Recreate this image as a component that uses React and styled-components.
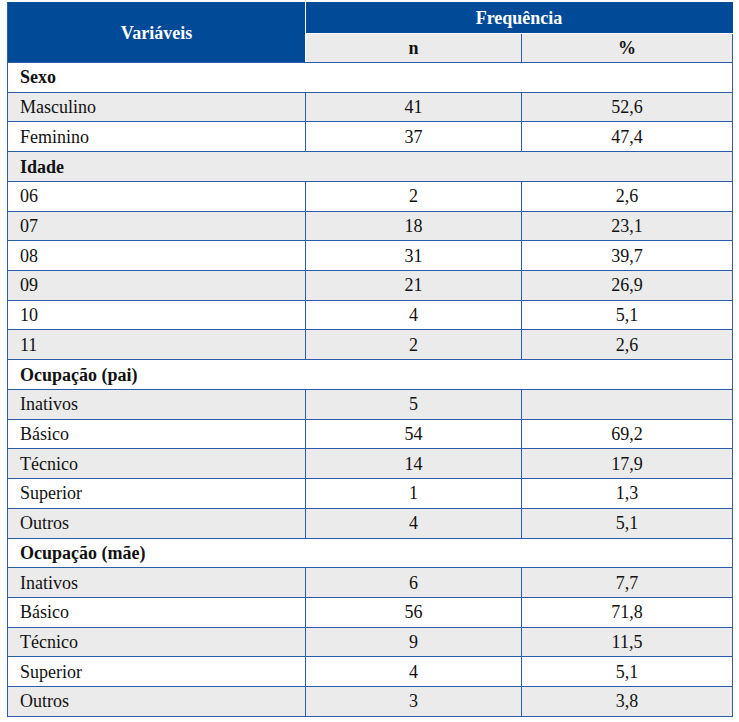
import React from 'react';
import styled, { createGlobalStyle } from 'styled-components';

const Global = createGlobalStyle`
  html, body { margin: 0; padding: 0; background: #ffffff; }
  body { font-family: "Liberation Serif", serif !important; font-size: 18px !important; }
  table, th, td { font-family: "Liberation Serif", serif !important; font-size: 18px !important; }
`;

const BLUE = '#004a98';
const LINE = '#2a5caa';
const GRAY = '#ebebeb';

const Page = styled.div`
  padding: 2px 0 0 7px;
`;

const Table = styled.table`
  border-collapse: collapse;
  table-layout: fixed;
  width: 725px;
  color: #111111;
  line-height: 1;
`;

const HeadRow = styled.tr`
  height: ${(p) => p.$h}px;
`;

const HeadCell = styled.th`
  background: ${BLUE};
  color: #ffffff;
  font-weight: bold;
  text-align: center;
  vertical-align: middle;
  padding: 0;
  border: 1px solid ${BLUE};
  border-right-color: ${(p) => (p.$divider ? '#ffffff' : BLUE)};
  border-bottom-color: ${(p) => (p.$under ? '#ffffff' : p.$bottom ? LINE : BLUE)};
  border-left-color: ${LINE};
  border-top-color: ${BLUE};
`;

const SubHeadCell = styled.th`
  background: ${GRAY};
  color: #111111;
  font-weight: bold;
  text-align: center;
  padding: 0;
  border: 1px solid ${LINE};
`;

const Row = styled.tr`
  height: 29.73px;
  background: ${(p) => (p.$alt ? GRAY : '#ffffff')};
`;

const GroupCell = styled.td`
  font-weight: bold;
  text-align: left;
  padding: 0 0 0 12px;
  border: 1px solid ${LINE};
`;

const LabelCell = styled.td`
  text-align: left;
  padding: 0 0 0 12px;
  border: 1px solid ${LINE};
`;

const NumCell = styled.td`
  text-align: center;
  padding: 0;
  border: 1px solid ${LINE};
`;

const groups = [
  {
    title: 'Sexo',
    rows: [
      ['Masculino', '41', '52,6'],
      ['Feminino', '37', '47,4'],
    ],
  },
  {
    title: 'Idade',
    rows: [
      ['06', '2', '2,6'],
      ['07', '18', '23,1'],
      ['08', '31', '39,7'],
      ['09', '21', '26,9'],
      ['10', '4', '5,1'],
      ['11', '2', '2,6'],
    ],
  },
  {
    title: 'Ocupação (pai)',
    rows: [
      ['Inativos', '5', ''],
      ['Básico', '54', '69,2'],
      ['Técnico', '14', '17,9'],
      ['Superior', '1', '1,3'],
      ['Outros', '4', '5,1'],
    ],
  },
  {
    title: 'Ocupação (mãe)',
    rows: [
      ['Inativos', '6', '7,7'],
      ['Básico', '56', '71,8'],
      ['Técnico', '9', '11,5'],
      ['Superior', '4', '5,1'],
      ['Outros', '3', '3,8'],
    ],
  },
];

export default function App() {
  let index = 0;
  const body = [];
  groups.forEach((g) => {
    body.push(
      <Row key={`g-${g.title}`} $alt={index % 2 === 1}>
        <GroupCell colSpan={3}>{g.title}</GroupCell>
      </Row>
    );
    index += 1;
    g.rows.forEach((r, i) => {
      body.push(
        <Row key={`${g.title}-${i}`} $alt={index % 2 === 1}>
          <LabelCell>{r[0]}</LabelCell>
          <NumCell>{r[1]}</NumCell>
          <NumCell>{r[2]}</NumCell>
        </Row>
      );
      index += 1;
    });
  });

  return (
    <>
      <Global />
      <Page>
        <Table>
          <colgroup>
            <col style={{ width: '298px' }} />
            <col style={{ width: '216px' }} />
            <col style={{ width: '211px' }} />
          </colgroup>
          <thead>
            <HeadRow $h={31}>
              <HeadCell rowSpan={2} $divider $bottom>
                Variáveis
              </HeadCell>
              <HeadCell colSpan={2} $under>
                Frequência
              </HeadCell>
            </HeadRow>
            <HeadRow $h={29}>
              <SubHeadCell>n</SubHeadCell>
              <SubHeadCell>%</SubHeadCell>
            </HeadRow>
          </thead>
          <tbody>{body}</tbody>
        </Table>
      </Page>
    </>
  );
}
